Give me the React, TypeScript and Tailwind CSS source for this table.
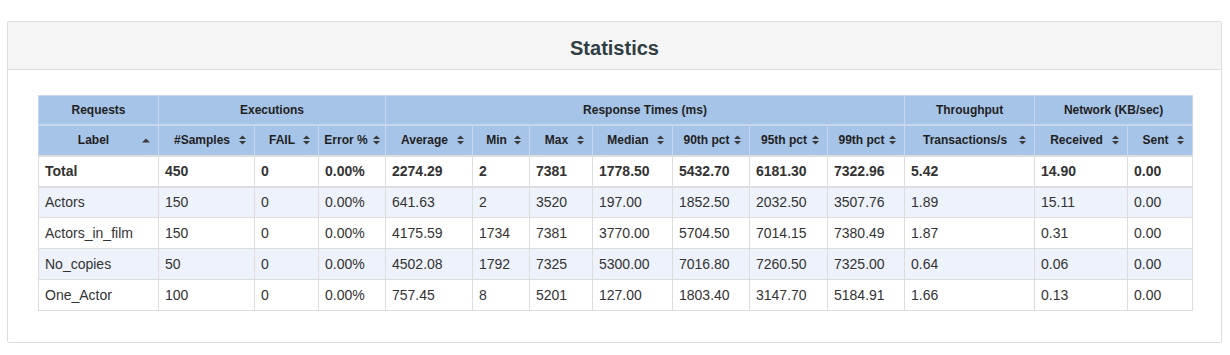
import React from "react";

const cols = [120, 96, 64, 67, 87, 57, 63, 80, 77, 78, 77, 130, 93, 65];

const headers = [
  "Label",
  "#Samples",
  "FAIL",
  "Error %",
  "Average",
  "Min",
  "Max",
  "Median",
  "90th pct",
  "95th pct",
  "99th pct",
  "Transactions/s",
  "Received",
  "Sent",
];

const total = ["Total", "450", "0", "0.00%", "2274.29", "2", "7381", "1778.50", "5432.70", "6181.30", "7322.96", "5.42", "14.90", "0.00"];

const rows = [
  ["Actors", "150", "0", "0.00%", "641.63", "2", "3520", "197.00", "1852.50", "2032.50", "3507.76", "1.89", "15.11", "0.00"],
  ["Actors_in_film", "150", "0", "0.00%", "4175.59", "1734", "7381", "3770.00", "5704.50", "7014.15", "7380.49", "1.87", "0.31", "0.00"],
  ["No_copies", "50", "0", "0.00%", "4502.08", "1792", "7325", "5300.00", "7016.80", "7260.50", "7325.00", "0.64", "0.06", "0.00"],
  ["One_Actor", "100", "0", "0.00%", "757.45", "8", "5201", "127.00", "1803.40", "3147.70", "5184.91", "1.66", "0.13", "0.00"],
];

function SortBoth() {
  return (
    <svg width="7" height="10" viewBox="0 0 7 10" className="block shrink-0">
      <polygon points="0,4 3.5,0.5 7,4" fill="#3a3a3a" />
      <polygon points="0,6 7,6 3.5,9.5" fill="#3a3a3a" />
    </svg>
  );
}

function SortUp() {
  return (
    <svg width="8" height="5" viewBox="0 0 8 5" className="block shrink-0">
      <polygon points="0,4.5 4,0.5 8,4.5" fill="#3a3a3a" />
    </svg>
  );
}

export default function App() {
  return (
    <div
      className="w-[1230px] h-[355px] bg-white pt-[21px] pl-[7px] pr-[8px]"
      style={{ fontFamily: '"Liberation Sans", Arial, Helvetica, sans-serif' }}
    >
      <div className="border border-[#dddddd] rounded-[2px] bg-white">
        <div className="h-[48px] bg-[#f5f5f5] border-b border-[#dddddd] flex items-center justify-center pt-[4px]">
          <h2 className="text-[20px] font-bold text-[#2f3e42] leading-none">Statistics</h2>
        </div>
        <div className="pl-[30px] pr-[29px] pt-[25px] pb-[31px]">
          <table className="table-fixed border-collapse w-[1154px] text-[14px] text-[#333333]">
            <colgroup>
              {cols.map((w, i) => (
                <col key={i} style={{ width: w }} />
              ))}
            </colgroup>
            <thead>
              <tr className="h-[29px] bg-[#a6c3e8] text-[12px] font-bold text-[#1f1f1f]">
                <th className="border border-[#c6d7ef] border-b-2 text-center">Requests</th>
                <th colSpan={3} className="border border-[#c6d7ef] border-b-2 text-center">Executions</th>
                <th colSpan={7} className="border border-[#c6d7ef] border-b-2 text-center">Response Times (ms)</th>
                <th className="border border-[#c6d7ef] border-b-2 text-center">Throughput</th>
                <th colSpan={2} className="border border-[#c6d7ef] border-b-2 text-center">Network (KB/sec)</th>
              </tr>
              <tr className="h-[31px] bg-[#a6c3e8] text-[12px] font-bold text-[#1f1f1f]">
                {headers.map((h, i) => (
                  <th key={h} className="border border-[#c6d7ef] border-b-2 border-b-[#dddddd] p-0 font-bold">
                    <div className={`flex items-center ${i === 3 ? "pl-[3px] pr-[5px] gap-[3px]" : "pl-[6px] pr-[8px]"}`}>
                      <span className="flex-1 text-center whitespace-nowrap">{h}</span>
                      {i === 0 ? <SortUp /> : <SortBoth />}
                    </div>
                  </th>
                ))}
              </tr>
            </thead>
            <tbody>
              <tr className="h-[31px] bg-white font-bold">
                {total.map((c, i) => (
                  <td key={i} className="border border-[#dddddd] border-b-2 px-[6px] text-left whitespace-nowrap">
                    {c}
                  </td>
                ))}
              </tr>
              {rows.map((r, ri) => (
                <tr key={ri} className={`h-[31px] ${ri % 2 === 0 ? "bg-[#edf2fb]" : "bg-white"}`}>
                  {r.map((c, i) => (
                    <td key={i} className="border border-[#dddddd] px-[6px] text-left whitespace-nowrap">
                      {c}
                    </td>
                  ))}
                </tr>
              ))}
            </tbody>
          </table>
        </div>
      </div>
    </div>
  );
}
